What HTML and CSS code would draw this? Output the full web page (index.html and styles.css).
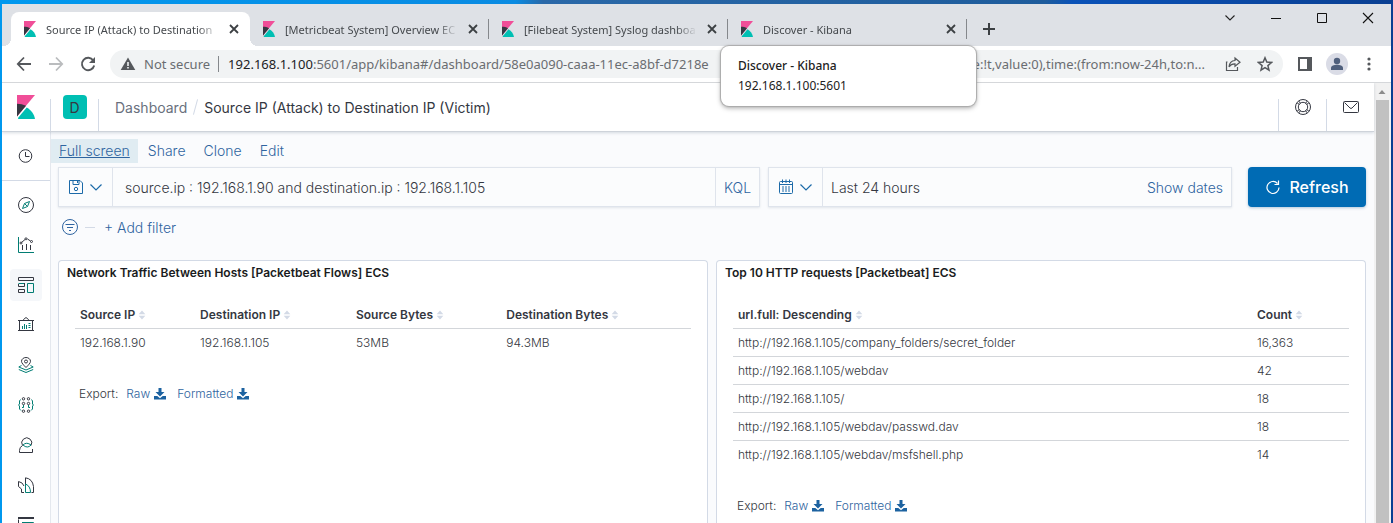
FILE: index.html
```html
<!DOCTYPE html>
<html lang="en">
<head>
<meta charset="utf-8">
<title>Source IP (Attack) to Destination IP (Victim) - Kibana</title>
<link rel="stylesheet" href="styles.css">
</head>
<body>
<svg class="defs" aria-hidden="true">
  <symbol id="kibana" viewBox="0 0 24 32">
    <path fill="#f04e98" d="M0 0v28.8L24 0z"/>
    <path fill="#343741" d="M0 11.500v17.300l12-14.400C8.500 12.500 4 11.500 0 11.500z"/>
    <path fill="#00bfb3" d="M13 16.500L1.500 30.400V32H24c-1-6.500-5-12-11-15.500z"/>
  </symbol>
  <symbol id="close" viewBox="0 0 16 16"><path d="M4 4l8 8M12 4l-8 8" stroke="#3c4043" stroke-width="1.800"/></symbol>
  <symbol id="chevron" viewBox="0 0 16 16"><path d="M2.500 5.500L8 11l5.500-5.500" fill="none" stroke="currentColor" stroke-width="1.200"/></symbol>
  <symbol id="sort" viewBox="0 0 8 12"><path d="M0 5l4-4.500L8 5zM0 7l4 4.500L8 7z" fill="#d3dae6"/></symbol>
  <symbol id="download" viewBox="0 0 12 12"><path d="M4.500 0h3v4h3L6 8.500 1.500 4h3zM0 8h3.300L6 10.300 8.700 8H12v3.500H0z" fill="#1c62a0"/></symbol>
</svg>
<div class="desktop">
<div class="window">
  <div class="tabstrip">
    <div class="tab active">
      <svg class="favicon"><use href="#kibana"/></svg>
      <span class="tab-title">Source IP (Attack) to Destination</span>
      <button class="tab-close" aria-label="Close tab"><svg width="16" height="16"><use href="#close"/></svg></button>
    </div>
    <div class="tab">
      <svg class="favicon"><use href="#kibana"/></svg>
      <span class="tab-title">[Metricbeat System] Overview EC</span>
      <button class="tab-close" aria-label="Close tab"><svg width="16" height="16"><use href="#close"/></svg></button>
    </div>
    <div class="tab">
      <svg class="favicon"><use href="#kibana"/></svg>
      <span class="tab-title">[Filebeat System] Syslog dashboa</span>
      <button class="tab-close" aria-label="Close tab"><svg width="16" height="16"><use href="#close"/></svg></button>
    </div>
    <div class="tab">
      <svg class="favicon"><use href="#kibana"/></svg>
      <span class="tab-title">Discover - Kibana</span>
      <button class="tab-close" aria-label="Close tab"><svg width="16" height="16"><use href="#close"/></svg></button>
      <div class="tooltip"><strong>Discover - Kibana</strong><span>192.168.1.100:5601</span></div>
    </div>
    <button class="new-tab" aria-label="New tab"><svg width="14" height="14" viewBox="0 0 14 14"><path d="M7 1v12M1 7h12" stroke="#3c4043" stroke-width="2"/></svg></button>
    <div class="window-controls">
      <button aria-label="Search tabs"><svg width="12" height="12" viewBox="0 0 12 12"><path d="M1.500 3.500L6 8l4.500-4.500" fill="none" stroke="#222" stroke-width="1.100"/></svg></button>
      <button aria-label="Minimize"><svg width="12" height="12" viewBox="0 0 12 12"><path d="M1 6.500h10" stroke="#111"/></svg></button>
      <button aria-label="Maximize"><svg width="12" height="12" viewBox="0 0 12 12"><path d="M1.500 1.500h9v9h-9z" fill="none" stroke="#111"/></svg></button>
      <button aria-label="Close"><svg width="12" height="12" viewBox="0 0 12 12"><path d="M1 1l10 10M11 1L1 11" stroke="#111" stroke-width="1.100"/></svg></button>
    </div>
  </div>

  <div class="toolbar">
    <button class="nav" aria-label="Back"><svg width="16" height="16" viewBox="0 0 16 16"><path d="M15 8H2M8 1.500L1.800 8 8 14.500" fill="none" stroke="#55585c" stroke-width="1.800"/></svg></button>
    <button class="nav" aria-label="Forward"><svg width="16" height="16" viewBox="0 0 16 16"><path d="M1 8h13M8 1.500L14.200 8 8 14.500" fill="none" stroke="#babcbe" stroke-width="1.800"/></svg></button>
    <button class="nav" aria-label="Reload"><svg width="16" height="16" viewBox="0 0 16 16"><path d="M13.300 4.500A6.200 6.200 0 1 0 14.200 9.500" fill="none" stroke="#55585c" stroke-width="1.900"/><path d="M15 1v6H9z" fill="#55585c"/></svg></button>
    <div class="omnibox">
      <svg width="16" height="16" viewBox="0 0 16 16"><path d="M8 1.500L15.300 14H.7z" fill="#55585c"/><path d="M7.200 6h1.600v4H7.200zM7.200 11h1.600v1.600H7.200z" fill="#f1f3f4"/></svg>
      <span class="secure">Not secure</span>
      <div class="url"><span><b>192.168.1.100</b>:5601/app/kibana#/dashboard/58e0a090-caaa-11ec-a8bf-d7218e</span><span>(pause:!t,value:0),time:(from:now-24h,to:n...</span></div>
      <button class="omni-button" aria-label="Share"><svg width="16" height="16" viewBox="0 0 16 16"><path d="M2.500 6H1.500v8.500h11V11M10 2l5 4.200-5 4V7.800C7.500 7.700 5.500 8.500 4 10.800 4.300 7 6.500 4.800 10 4.500z" fill="none" stroke="#55585c" stroke-width="1.200"/></svg></button>
      <button class="omni-button" aria-label="Bookmark"><svg width="16" height="16" viewBox="0 0 16 16"><path d="M8 1.800l1.800 4.300 4.700.4-3.600 3.100 1.100 4.600L8 11.700l-4 2.500 1.100-4.600-3.600-3.100 4.700-.4z" fill="none" stroke="#55585c" stroke-width="1.500"/></svg></button>
    </div>
    <button class="tool" aria-label="Side panel"><svg width="14" height="14" viewBox="0 0 14 14"><path d="M1 1h12v12H1z" fill="none" stroke="#55585c" stroke-width="2"/><path d="M9 1h4v12H9z" fill="#55585c"/></svg></button>
    <button class="tool" aria-label="Profile"><svg width="22" height="22" viewBox="0 0 22 22"><circle cx="11" cy="11" r="11" fill="#dadce6"/><circle cx="11" cy="8" r="3.200" fill="#50607d"/><path d="M5 17v-2c0-2 3-3.200 6-3.200s6 1.200 6 3.200v2z" fill="#50607d"/></svg></button>
    <button class="tool" aria-label="Menu"><svg width="14" height="14" viewBox="0 0 14 14"><g fill="#55585c"><circle cx="7" cy="2" r="1.600"/><circle cx="7" cy="7" r="1.600"/><circle cx="7" cy="12" r="1.600"/></g></svg></button>
  </div>

  <div class="viewport">
    <div class="app">
      <header class="header">
        <a class="home" href="#" aria-label="Kibana home"><svg width="18" height="24"><use href="#kibana"/></svg></a>
        <div class="header-cell"><button class="space">D</button></div>
        <nav class="crumbs" aria-label="Breadcrumb"><a href="#">Dashboard</a><span class="slash"></span><span>Source IP (Attack) to Destination IP (Victim)</span></nav>
        <div class="header-cell"><button aria-label="Help"><svg width="16" height="16" viewBox="0 0 16 16" fill="none" stroke="#343741"><circle cx="8" cy="8" r="7.500"/><circle cx="8" cy="8" r="4.700"/><path d="M2.200 4l2.300 1.500M4 2.200l1.500 2.300M13.800 4l-2.300 1.500M12 2.200l-1.500 2.300M2.200 12l2.300-1.500M4 13.800l1.500-2.300M13.800 12l-2.300-1.500M12 13.800l-1.500-2.300"/></svg></button></div>
        <div class="header-cell"><button aria-label="News"><svg width="16" height="16" viewBox="0 0 16 16" fill="none" stroke="#343741"><rect x=".5" y="2.500" width="15" height="11" rx="1"/><path d="M1.500 3.500L7 9q1 1 2 0l5.500-5.500"/></svg></button></div>
      </header>
      <div class="body">
        <nav class="sidebar" aria-label="Applications">
          <div class="recent"><a href="#" aria-label="Recently viewed"><svg width="16" height="16" viewBox="0 0 16 16" fill="none" stroke="#343741"><circle cx="7.500" cy="8" r="6.300"/><path d="M7.500 4v4.500h4"/></svg></a></div>
          <a href="#" aria-label="Discover"><svg width="16" height="16" viewBox="0 0 16 16" fill="none" stroke="#343741"><circle cx="8" cy="8" r="7.500"/><path stroke="#017d73" d="M11.500 4.500L9.500 9.500 4.500 11.500 6.500 6.500z M6.500 6.500l3 3"/></svg></a>
          <a href="#" aria-label="Visualize"><svg width="16" height="16" viewBox="0 0 16 16" fill="none" stroke="#343741"><path stroke="#017d73" d="M.5 0v15.500H16"/><path d="M4.500 8v5M8.500 7v6M12.500 8v5M3.500 5.500L7 2.500M9.500 2l3 2"/><circle cx="3" cy="6" r="1"/><circle cx="8" cy="1.800" r="1"/><circle cx="13.500" cy="4.500" r="1"/></svg></a>
          <a href="#" class="current" aria-label="Dashboard"><svg width="16" height="16" viewBox="0 0 16 16" fill="none" stroke="#343741"><path d="M.5.500h15v3H.5z"/><path stroke="#017d73" d="M9.500 6.500h6v9h-6z"/><path stroke="#017d73" d="M.5 6.500h6"/><path d="M.5 7v2.500h6V6M.5 12.500h6v3h-6z"/></svg></a>
          <a href="#" aria-label="Canvas"><svg width="16" height="16" viewBox="0 0 16 16" fill="none" stroke="#343741"><path d="M1.500 3.500h13v10h-13zM0 3.500h2M14 3.500h2M0 13.500h2M14 13.500h2M5.500 3.500v-1l2.500-2 2.500 2v1"/><path stroke="#017d73" d="M4.500 9v3M6.500 7v5M8.500 8v4M10.500 6.500h2M10.500 8.500h2M10.500 10.500h2"/></svg></a>
          <a href="#" aria-label="Maps"><svg width="16" height="16" viewBox="0 0 16 16" fill="none" stroke="#343741"><path d="M8 10.500C5.500 8 3.500 6 3.500 4.300a4.500 3.800 0 0 1 9 0C12.500 6 10.500 8 8 10.500z"/><circle cx="8" cy="4.500" r="1.500"/><path stroke="#017d73" d="M3.500 8.500L.8 10 8 13l7.200-3-2.700-1.500M.8 12.500L8 15.500l7.200-3"/></svg></a>
          <a href="#" aria-label="Machine Learning"><svg width="16" height="16" viewBox="0 0 16 16" fill="none" stroke="#343741"><circle cx="5.500" cy="1.800" r="1.200"/><circle cx="10.500" cy="1.800" r="1.200"/><circle cx="5.500" cy="6.500" r="1.200"/><circle cx="10.500" cy="6.500" r="1.200"/><circle cx="5.500" cy="14.200" r="1.200"/><circle cx="10.500" cy="14.200" r="1.200"/><path stroke="#017d73" d="M2.500 2.500l-1 1.500v3L.5 8l1 1v3l1.500 1.500M13.500 2.500l1 1.500v3l1 1-1 1v3L13 13.500M5.500 8v2.500H4M10.500 8v2.500H12"/></svg></a>
          <a href="#" aria-label="Metrics"><svg width="16" height="16" viewBox="0 0 16 16" fill="none" stroke="#343741"><path d="M4.500 8.500A5 5 0 1 1 13 8.500M4.500 8.500q-3 1.500-3 5v2h13v-3.500"/><path stroke="#017d73" d="M5 8q3.500-3.500 8 0-3.500 4-8 0z"/></svg></a>
          <a href="#" aria-label="Logs"><svg width="16" height="16" viewBox="0 0 16 16" fill="none" stroke="#343741"><path d="M.5 4.500v5l3 2.500v3.500h2.500M.5 4.500l3.500 1.500 2 3M7.500 7V.8q7 1 8 8.700v6h-2"/><path stroke="#017d73" d="M7.500 7v8.500h5Q12.500 9 7.500 7z"/></svg></a>
          <a href="#" aria-label="APM"><svg width="16" height="16" viewBox="0 0 16 16" fill="none"><path d="M0 1h16M0 2.500v4" stroke="#343741" stroke-width="2"/><path d="M4 5.500h11.500v8H2" stroke="#017d73"/></svg></a>
        </nav>
        <main class="main">
          <div class="menu"><a href="#" class="focused">Full screen</a><a href="#">Share</a><a href="#">Clone</a><a href="#">Edit</a></div>
          <div class="querybar">
            <div class="field">
              <button class="field-menu" aria-label="Saved queries"><svg width="16" height="16" viewBox="0 0 16 16" fill="none" stroke="currentColor"><path d="M1.500 1.500h10.500l2.500 2.500v10.500h-13zM5 1.500v4h6v-4M9.500 2v2"/><circle cx="8" cy="10" r="1.700"/></svg><svg width="16" height="16"><use href="#chevron"/></svg></button>
              <input type="text" aria-label="Search" value="source.ip : 192.168.1.90 and destination.ip : 192.168.1.105">
              <button class="kql">KQL</button>
            </div>
            <div class="field">
              <button class="field-menu" aria-label="Quick select"><svg width="16" height="16" viewBox="0 0 16 16" fill="none" stroke="currentColor"><rect x="1.500" y="2.500" width="13" height="12" rx="1"/><path d="M1.500 5.500h13M4.500.5v3.500M8 .5v3.500M11.500.5v3.500"/><path d="M4 8h2M7 8h2M10 8h2M4 10h2M7 10h2M10 10h2M4 12h2M7 12h2M10 12h2"/></svg><svg width="16" height="16"><use href="#chevron"/></svg></button>
              <button class="range"><span>Last 24 hours</span><span class="show-dates">Show dates</span></button>
            </div>
            <button class="refresh"><svg width="16" height="16" viewBox="0 0 16 16" fill="none" stroke="#fff" stroke-width="1.200"><path d="M12.500 4.500A6 6 0 1 0 14 8.500M13.500 1.500v4h-4"/></svg>Refresh</button>
          </div>
          <div class="filters">
            <button aria-label="Filter options"><svg width="16" height="16" viewBox="0 0 16 16" fill="none" stroke="currentColor"><circle cx="8" cy="8" r="7.500"/><path d="M3.500 5.500h9M5 8.500h6M7 11.500h2"/></svg></button>
            <span class="dash"></span>
            <button>+ Add filter</button>
          </div>
          <div class="panels">
            <section class="panel">
              <h2>Network Traffic Between Hosts [Packetbeat Flows] ECS</h2>
              <table class="flows">
                <thead><tr><th>Source IP<svg class="sort"><use href="#sort"/></svg></th><th>Destination IP<svg class="sort"><use href="#sort"/></svg></th><th>Source Bytes<svg class="sort"><use href="#sort"/></svg></th><th>Destination Bytes<svg class="sort"><use href="#sort"/></svg></th></tr></thead>
                <tbody><tr><td>192.168.1.90</td><td>192.168.1.105</td><td>53MB</td><td>94.3MB</td></tr></tbody>
              </table>
              <div class="export"><span>Export:</span><a href="#">Raw<svg width="12" height="12"><use href="#download"/></svg></a><a href="#">Formatted<svg width="12" height="12"><use href="#download"/></svg></a></div>
            </section>
            <section class="panel">
              <h2>Top 10 HTTP requests [Packetbeat] ECS</h2>
              <table class="requests">
                <thead><tr><th>url.full: Descending<svg class="sort"><use href="#sort"/></svg></th><th>Count<svg class="sort"><use href="#sort"/></svg></th></tr></thead>
                <tbody>
                  <tr><td>http://192.168.1.105/company_folders/secret_folder</td><td>16,363</td></tr>
                  <tr><td>http://192.168.1.105/webdav</td><td>42</td></tr>
                  <tr><td>http://192.168.1.105/</td><td>18</td></tr>
                  <tr><td>http://192.168.1.105/webdav/passwd.dav</td><td>18</td></tr>
                  <tr><td>http://192.168.1.105/webdav/msfshell.php</td><td>14</td></tr>
                </tbody>
              </table>
              <div class="export"><span>Export:</span><a href="#">Raw<svg width="12" height="12"><use href="#download"/></svg></a><a href="#">Formatted<svg width="12" height="12"><use href="#download"/></svg></a></div>
            </section>
          </div>
        </main>
      </div>
    </div>
    <div class="scrollbar"><svg width="16" height="17" viewBox="0 0 16 17"><path d="M4.500 11L8 7l3.500 4z" fill="#8c8c8c"/></svg><div class="thumb"></div></div>
  </div>
</div>
</div>
</body>
</html>
```

FILE: styles.css
```css
* { box-sizing: border-box; }
body { margin: 0; overflow: hidden; }
button { border: 0; padding: 0; background: none; font: inherit; color: inherit; display: flex; align-items: center; justify-content: center; }
a { color: #2f64a0; text-decoration: none; }
svg { display: block; flex: none; }
.defs { position: absolute; width: 0; height: 0; }

.desktop { height: 100vh; padding: 4px 2px 0; background: linear-gradient(90deg, #0098ee 0, #0a8be2 37%, #2a68a8 39%, #1e5c9c 75%, #0a52b8 77%, #0a3f92 100%); }
.window { display: flex; flex-direction: column; height: 100%; font-family: "Noto Sans", sans-serif; background: #fff; }

.tabstrip { display: flex; height: 42px; padding: 8px 0 0 9px; background: #dee1e6; }
.tab { position: relative; display: flex; align-items: center; flex: 0 1 239px; min-width: 0; padding: 0 8px 0 13px; font-size: 11px; color: #45494d; }
.tab::after { content: ""; position: absolute; right: 0; top: 7px; width: 1px; height: 20px; background: #85888c; }
.tab.active { background: #fff; border-radius: 8px 8px 0 0; }
.tab.active::before, .tab.active::after { content: ""; position: absolute; top: auto; bottom: 0; width: 8px; height: 8px; }
.tab.active::before { left: -8px; background: radial-gradient(circle at 0 0, #dee1e6 8px, #fff 8px); }
.tab.active::after { right: -8px; background: radial-gradient(circle at 100% 0, #dee1e6 8px, #fff 8px); }
.favicon { width: 12px; height: 16px; margin-right: 10px; }
.tab-title { flex: 1; overflow: hidden; white-space: nowrap; mask-image: linear-gradient(90deg, #000 88%, transparent); }
.tab-close { margin-left: 7px; }
.tooltip { position: absolute; z-index: 5; left: -7px; top: 34px; width: 255px; height: 60px; display: flex; flex-direction: column; justify-content: center; padding: 0 17px; background: #fff; border-radius: 8px; box-shadow: 0 0 1px 1px #aaa, 0 2px 5px rgba(0, 0, 0, .35); font-size: 12px; line-height: 20px; color: #222; }
.tooltip strong { font-weight: 500; }
.new-tab { width: 44px; }
.window-controls { display: flex; margin-left: auto; height: 12px; }
.window-controls button { width: 46px; }

.toolbar { display: flex; align-items: center; flex: none; height: 37px; padding-left: 6px; border-bottom: 1px solid #d5d7da; }
.nav { width: 32px; height: 28px; }
.omnibox { display: flex; align-items: center; flex: 1; min-width: 0; height: 28px; margin: 0 6px; padding: 0 2px 0 10px; border-radius: 14px; background: #f1f3f4; font-size: 13px; color: #6a6d71; }
.secure { margin-left: 8px; padding-right: 8px; border-right: 1px solid #85888c; line-height: 16px; }
.url { display: flex; justify-content: space-between; flex: 1; min-width: 0; margin: 0 12px 0 9px; white-space: nowrap; }
.url b { font-weight: 400; color: #202124; }
.omni-button { width: 32px; }
.tool { width: 32px; }
.tool:last-child { margin-right: 6px; }

.viewport { display: flex; flex: 1; min-height: 0; overflow: hidden; font-family: Inter, sans-serif; font-size: 14px; color: #343741; }
.app { display: flex; flex-direction: column; flex: 1; min-width: 0; }
.scrollbar { width: 17px; background: #f1f1f1; }
.thumb { width: 13px; height: 100%; margin-left: 2px; background: #c1c1c1; }

.header { position: relative; z-index: 1; display: flex; flex: none; height: 49px; border-bottom: 1px solid #ced3da; box-shadow: 0 1px 3px rgba(60, 80, 110, .2); background: #fff; }
.home { display: flex; align-items: center; justify-content: center; width: 48px; }
.header-cell { display: flex; align-items: center; justify-content: center; width: 48px; border-left: 1px solid; border-image: linear-gradient(transparent 16px, #d3dae6 16px) 1; }
.space { width: 24px; height: 24px; border-radius: 4px; background: #00bfb3; }
.crumbs { display: flex; align-items: center; flex: 1; border-left: 1px solid; border-image: linear-gradient(transparent 16px, #d3dae6 16px) 1; padding-left: 16px; }
.crumbs a { color: #69707d; }
.slash { width: 1px; height: 16px; margin: 0 8px; background: #d3dae6; transform: rotate(15deg); }

.body { display: flex; flex: 1; min-height: 0; }
.sidebar { display: flex; flex-direction: column; align-items: center; width: 49px; border-right: 1px solid #e4e8ee; background: #fff; }
.sidebar a { display: flex; align-items: center; justify-content: center; flex: none; width: 32px; height: 32px; margin-top: 8px; border-radius: 4px; }
.recent { align-self: stretch; display: flex; justify-content: center; flex: none; height: 49px; border-bottom: 1px solid #d3dae6; }
.sidebar .current { background: #f5f7fa; }
.main { display: flex; flex-direction: column; flex: 1; min-width: 0; background: #fafbfd; font-weight: 300; }

.menu { display: flex; gap: 18px; padding: 7px 0 4px; line-height: 24px; }
.focused { padding: 0 8px; margin-right: -8px; background: #e0ecf2; text-decoration: underline; }
.querybar { display: grid; grid-template-columns: minmax(0, 71fr) minmax(0, 48fr) auto; padding: 0 8px 0 7px; height: 40px; }
.field { display: flex; margin-right: 8px; border: 1px solid #dfe4ec; box-shadow: 0 1px 2px rgba(60, 80, 110, .12); background: #fbfcfd; }
.field + .field { margin-right: 16px; }
.field-menu { width: 54px; gap: 4px; border-right: 1px solid #dfe4ec; color: #1c6aa8; }
.field input { flex: 1; min-width: 0; padding: 0 12px; border: 0; background: none; font: inherit; color: #343741; }
.kql { width: 44px; border-left: 1px solid #dfe4ec; color: #2f64a0; }
.range { flex: 1; justify-content: space-between; padding: 0 8px; }
.show-dates { color: #2f64a0; }
.refresh { width: 118px; gap: 8px; border-radius: 4px; background: #006bb4; box-shadow: 0 1px 3px rgba(0, 80, 140, .3); font-size: 16px; font-weight: 500; color: #fff; }
.filters { display: flex; align-items: center; height: 40px; padding-left: 11px; color: #2f64a0; }
.dash { width: 10px; height: 1px; margin: 0 9px 0 7px; background: #d3dae6; }
.panels { display: grid; grid-template-columns: 1fr 1fr; gap: 8px; flex: 1; padding: 13px 8px 0 7px; }
.panel { min-width: 0; padding: 0 16px; border: 1px solid #d3dae6; border-bottom: 0; border-radius: 4px 4px 0 0; background: #fff; font-size: 12px; }
.panel h2 { margin: 0 -8px 16px; font-size: 12px; font-weight: 600; line-height: 24px; color: #1a1c21; white-space: nowrap; }
table { width: 100%; table-layout: fixed; border-collapse: collapse; }
th, td { height: 28px; padding: 0 5px; text-align: left; }
th { height: 27px; font-weight: 600; white-space: nowrap; }
tr + tr, tbody { border-top: 1px solid #d3d6da; }
.sort { display: inline-block; width: 8px; height: 10px; margin-left: 3px; vertical-align: -1px; }
.flows th:nth-child(1) { width: 19.5%; }
.flows th:nth-child(2) { width: 25.3%; }
.flows th:nth-child(3) { width: 24.4%; }
.requests th:last-child { width: 97px; }
.export { display: flex; gap: 8px; margin-top: 29px; padding-left: 4px; line-height: 18px; }
.export a { display: flex; align-items: center; gap: 4px; }
.export a + a { margin-left: 3px; }
```
